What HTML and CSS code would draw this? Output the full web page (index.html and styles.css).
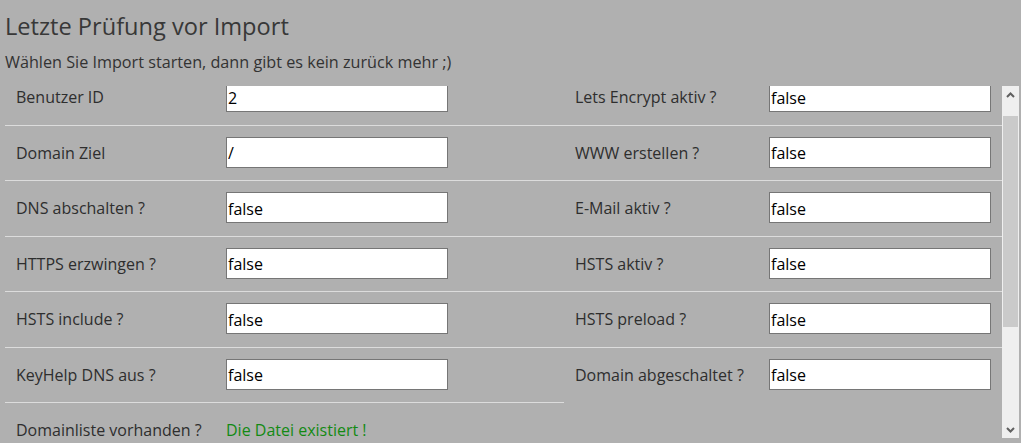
FILE: index.html
```html
<!DOCTYPE html>
<html lang="de">
<head>
<meta charset="utf-8">
<title>Letzte Prüfung vor Import</title>
<link rel="stylesheet" href="styles.css">
</head>
<body>
<h1 class="title">Letzte Prüfung vor Import</h1>
<p class="subtitle">Wählen Sie Import starten, dann gibt es kein zurück mehr ;)</p>
<div class="frame">
  <div class="viewport">
    <div class="grid">
      <div class="col col-left">
        <div class="row"><span class="label">Benutzer ID</span><input class="field" type="text" value="2"></div>
        <div class="row"><span class="label">Domain Ziel</span><input class="field" type="text" value="/"></div>
        <div class="row"><span class="label">DNS abschalten ?</span><input class="field" type="text" value="false"></div>
        <div class="row"><span class="label">HTTPS erzwingen ?</span><input class="field" type="text" value="false"></div>
        <div class="row"><span class="label">HSTS include ?</span><input class="field" type="text" value="false"></div>
        <div class="row"><span class="label">KeyHelp DNS aus ?</span><input class="field" type="text" value="false"></div>
        <div class="row"><span class="label">Domainliste vorhanden ?</span><span class="ok">Die Datei existiert !</span></div>
      </div>
      <div class="col col-right">
        <div class="row"><span class="label">Lets Encrypt aktiv ?</span><input class="field" type="text" value="false"></div>
        <div class="row"><span class="label">WWW erstellen ?</span><input class="field" type="text" value="false"></div>
        <div class="row"><span class="label">E-Mail aktiv ?</span><input class="field" type="text" value="false"></div>
        <div class="row"><span class="label">HSTS aktiv ?</span><input class="field" type="text" value="false"></div>
        <div class="row"><span class="label">HSTS preload ?</span><input class="field" type="text" value="false"></div>
        <div class="row"><span class="label">Domain abgeschaltet ?</span><input class="field" type="text" value="false"></div>
      </div>
    </div>
  </div>
  <div class="scrollbar">
    <div class="sb-btn">
      <svg width="9" height="6" viewBox="0 0 9 6"><polyline points="1,5 4.5,1.5 8,5" fill="none" stroke="#606060" stroke-width="2"/></svg>
    </div>
    <div class="sb-track"><div class="sb-thumb"></div></div>
    <div class="sb-btn">
      <svg width="9" height="6" viewBox="0 0 9 6"><polyline points="1,1 4.5,4.5 8,1" fill="none" stroke="#606060" stroke-width="2"/></svg>
    </div>
  </div>
</div>
</body>
</html>
```
FILE: styles.css
```css
html, body {
  margin: 0;
  padding: 0;
  background: #b0b0b0;
}
body {
  padding: 0 0 0 5px;
  font-family: "Open Sans", "Noto Sans", sans-serif;
  color: #333333;
}
.title {
  margin: 0;
  padding-top: 9px;
  font-size: 23.6px;
  font-weight: 400;
  line-height: 34px;
  color: #383838;
}
.subtitle {
  margin: 6px 0 0 0;
  font-size: 16.2px;
  line-height: 26px;
  color: #333333;
}
.frame {
  margin-top: 11px;
  width: 1014px;
  height: 352px;
  display: flex;
}
.viewport {
  flex: 1;
  min-width: 0;
  overflow: hidden;
}
.grid {
  display: grid;
  grid-template-columns: 559px 438px;
  align-items: start;
  margin-top: -16px;
}
.row {
  display: flex;
  align-items: flex-start;
  height: 55.5px;
  box-sizing: border-box;
  padding: 11px 0 0 11px;
  border-bottom: 1px solid #dcdcdc;
}
.col .row:last-child {
  border-bottom: none;
}
.label,
.ok {
  flex: none;
  padding-top: 8px;
  font-size: 16px;
  line-height: 16px;
  color: #2e2e2e;
}
.ok {
  color: #138a13;
}
.col-left .label { width: 210px; }
.col-right .label { width: 194px; }
.field {
  flex: none;
  width: 222px;
  height: 31px;
  box-sizing: border-box;
  margin: 0;
  padding: 2px 1px 0 1px;
  border: 1px solid #767676;
  background: #ffffff;
  font-family: "Open Sans", "Noto Sans", sans-serif;
  font-size: 16px;
  color: #000000;
  outline: none;
}
.scrollbar {
  flex: none;
  width: 17px;
  display: flex;
  flex-direction: column;
  background: #efefef;
}
.sb-btn {
  flex: none;
  height: 17px;
  display: flex;
  align-items: center;
  justify-content: center;
}
.sb-track {
  flex: 1;
  padding-top: 13px;
}
.sb-thumb {
  height: 211px;
  margin: 0 1px;
  background: #cacaca;
}
```
